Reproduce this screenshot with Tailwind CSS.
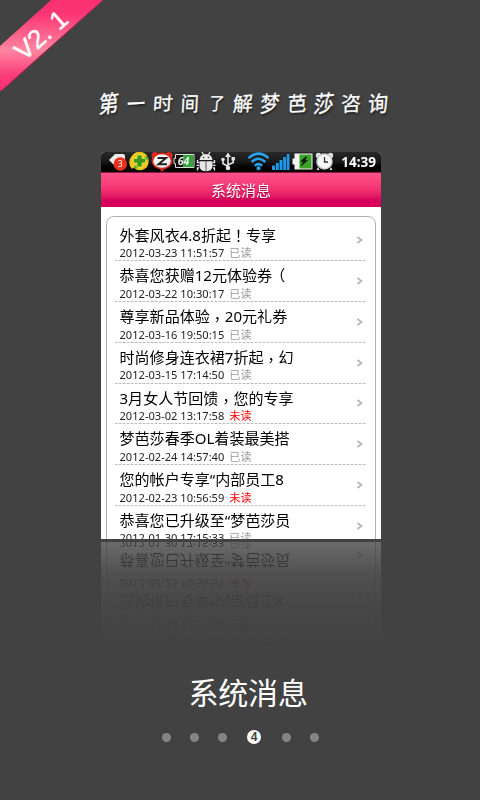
<!DOCTYPE html>
<html lang="zh-CN">
<head>
<meta charset="utf-8">
<title>系统消息</title>
<script src="https://cdn.jsdelivr.net/npm/@tailwindcss/browser@4"></script>
</head>
<body class="bg-[#424242]">
<main class="relative flex h-[800px] w-[480px] flex-col overflow-hidden bg-[#424242] pt-[85px] font-['Noto_Sans','Noto_Sans_CJK_SC',sans-serif]">
  <!-- version ribbon -->
  <div class="absolute top-0 left-0 h-[92px] w-[106px]">
    <svg class="absolute inset-0" width="106" height="92" viewBox="0 0 106 92">
      <defs><linearGradient id="rib" x1="0" y1="0" x2="0" y2="91" gradientUnits="userSpaceOnUse">
        <stop offset="0" stop-color="#fa2f71"/><stop offset=".15" stop-color="#fa3574"/><stop offset=".55" stop-color="#ff86a0"/><stop offset=".82" stop-color="#fa3d78"/><stop offset="1" stop-color="#fa2f71"/>
      </linearGradient></defs>
      <path d="M51 0H103L1 91L0 90V46Z" fill="url(#rib)"/>
      <path d="M103 0L1 91" stroke="#c01f5c" stroke-width="1" fill="none"/>
    </svg>
    <span class="absolute top-[19px] left-[7px] w-[68px] -rotate-[41deg] text-center font-['Liberation_Sans',sans-serif] text-[26px] leading-[32px] whitespace-nowrap text-white [-webkit-text-stroke:0.4px_white]">V2. 1</span>
  </div>

  <h1 class="flex h-[36px] w-[289px] ml-[99px] shrink-0 items-center justify-between font-['Noto_Sans_CJK_SC',sans-serif] text-[20px] text-white [text-shadow:1px_2px_2px_#222] [-webkit-text-stroke:0.3px_white]">
    <span class="inline-block -skew-x-12 -rotate-6 scale-y-115">第</span><span class="inline-block -rotate-3 scale-x-90">一</span><span class="inline-block -skew-x-6 -rotate-3 scale-y-90">时</span><span class="inline-block -skew-x-3 scale-x-90">间</span><span class="inline-block -skew-x-6 scale-x-75 scale-y-90">了</span><span class="inline-block -skew-x-6 -rotate-3">解</span><span class="inline-block -skew-x-12 -rotate-3 scale-x-95 scale-y-110">梦</span><span class="inline-block -skew-x-6 -rotate-3 scale-x-95">芭</span><span class="inline-block -skew-x-12 -rotate-3 scale-y-115">莎</span><span class="inline-block -skew-x-3 -rotate-3">咨</span><span class="inline-block -skew-x-6 -rotate-3 scale-y-110">询</span>
  </h1>

  <section class="mt-[31px] ml-[101px] h-[387px] w-[280px] shrink-0 overflow-hidden rounded-t-[4px] bg-white [-webkit-box-reflect:below_3px_linear-gradient(to_bottom,transparent_72%,rgba(0,0,0,0.03)_84%,rgba(0,0,0,0.08)_92%,rgba(0,0,0,0.22)_100%)]">
    <div class="flex h-[20px] items-center justify-between bg-linear-to-b from-[#292929] via-[#171717] to-black pr-[5px]">
      <svg width="236" height="20" viewBox="101 152 236 20">
        <path d="M109 160L115 154H123Q125 154 125 156V164Q125 166 123 166H115Z" fill="#e9e9e9"/>
        <circle cx="120.300" cy="164" r="6.700" fill="#e8311c"/>
        <text x="120.300" y="167.300" font-size="8.500" text-anchor="middle" fill="#fff">3</text>
        <circle cx="139.500" cy="161" r="9.300" fill="#5fae25"/>
        <path d="M132 156A9 9 0 0 1 147 156L142 159L132 169A9 9 0 0 1 132 156M147 167Q142 172 136 169L148 159Q149 163 147 167" fill="#f2c51c"/>
        <path d="M137 155H142V158.500H145.500V163H142V167H137V163H133.500V158.500H137Z" fill="#3d9219" stroke="#dde85e" stroke-width=".8"/>
        <circle cx="155" cy="155.500" r="3.500" fill="#d92a22"/><circle cx="169" cy="155.500" r="3.500" fill="#d92a22"/>
        <path d="M158 167L162 172L166 167Z" fill="#d92a22"/>
        <ellipse cx="162" cy="161" rx="9.600" ry="7.600" fill="#f5f5f5" stroke="#d92a22" stroke-width="1.800"/>
        <path d="M157.500 158H166L158.500 164.300H167" fill="none" stroke="#222" stroke-width="2"/>
        <path d="M175.500 154.500H194V167.500H175.500V163.500H174V158.500H175.500Z" fill="#111" stroke="#ddd"/>
        <rect x="183" y="155" width="10.500" height="12" fill="#35a33c"/>
        <text x="183.500" y="165" font-size="10.500" font-style="italic" font-weight="600" text-anchor="middle" fill="#fff">64</text>
        <g fill="#e7e7e7"><path d="M199.500 160A6.500 6 0 0 1 212.500 160Z"/><path d="M199.500 161.200H212.500V167Q211.500 171.200 206 171.200Q200.500 171.200 199.500 167Z"/>
        <path d="M202 152L204 155.500M210 152L208 155.500M199 162.500H197.500V160M213 162.500H214.500V160M199 165.300H196.500M213 165.300H215.500M199 168H197.500V170.500M213 168H214.500V170.500" stroke="#e7e7e7" stroke-width="1.300" fill="none"/></g>
        <path d="M206 161V171" stroke="#444" stroke-width=".9"/><circle cx="203.500" cy="157.500" r=".8" fill="#333"/><circle cx="208.500" cy="157.500" r=".8" fill="#333"/>
        <g stroke="#e4e4e4" stroke-width="1.600" fill="none"><path d="M228 156V168M228 166.500L223 163.500V159.500M228 165L233.200 162.500V159"/></g>
        <g fill="#e4e4e4"><path d="M225 157L228 152.500L231 157Z"/><circle cx="228" cy="168" r="2.300"/><circle cx="223" cy="159.500" r="1.800"/><rect x="231.500" y="157" width="3.400" height="3.400"/></g>
        <g stroke="#2aa3ef" stroke-width="2.500" fill="none"><path d="M248.500 158.200Q258.500 149 268.500 158.200M251.700 162Q258.500 155.500 265.300 162M254.800 165.700Q258.500 162.500 262.200 165.700"/></g><circle cx="258.500" cy="168.300" r="2" fill="#2aa3ef"/>
        <g fill="#1f98ec"><rect x="272" y="165.500" width="3" height="4.500"/><rect x="275.800" y="163" width="3" height="7"/><rect x="279.500" y="160" width="3" height="10"/><rect x="283.200" y="157" width="3" height="13"/><rect x="286.800" y="154" width="2.700" height="16"/></g>
        <path d="M294.500 153.500H312.500V169.500H294.500V164.500H292.500V158.500H294.500Z" fill="#f2f2ee"/><rect x="299.500" y="154.500" width="12" height="14" fill="#3aa226"/>
        <path d="M305.500 157L300.500 161.500H303.500L301 166L307.500 160.500H304.500L307 157Z" fill="#101810" stroke="#101810" stroke-width=".6"/>
        <g fill="#ddd"><circle cx="318.500" cy="155.500" r="2.700"/><circle cx="330.500" cy="155.500" r="2.700"/><path d="M318 167L316.500 170H319.500ZM331 167L332.500 170H329.500Z"/></g>
        <circle cx="324.500" cy="161.500" r="7.500" fill="#f6f6f6" stroke="#ccc" stroke-width="1.600"/><path d="M324.500 157V162H328" fill="none" stroke="#333" stroke-width="1.300"/>
      </svg>
      <span class="-ml-[2px] font-['Noto_Sans',sans-serif] text-[13.5px] leading-[18px] pb-[1px] font-bold text-white">14:39</span>
    </div>
    <h2 class="flex h-[35px] items-center justify-center border-t border-[#8f1741] bg-linear-to-b from-[#fb5289] from-0% via-[#f53474] via-45% to-[#d8005a] to-80% text-[15px] text-white [text-shadow:0_1px_1px_#a3003f]">系统消息</h2>
    <ul id="list" class="mx-[5px] mt-[9px] h-[400px] rounded-t-[8px] border border-[#b0b0b0] px-[8px] pt-[3.5px]"></ul>
  </section>

  <h3 class="mt-[130px] flex h-[44px] shrink-0 items-center pl-[188.5px] font-['Noto_Sans_CJK_SC',sans-serif] text-[30px] tracking-[-0.2px] text-white">系统消息</h3>
  <nav class="mt-[16px] ml-[162px] flex h-[16px] w-[157px] items-center">
    <i class="mt-[1px] mr-[19px] size-[9px] rounded-full bg-[#858585]"></i>
    <i class="mr-[19px] size-[9px] rounded-full bg-[#858585]"></i>
    <i class="mr-[20px] size-[9px] rounded-full bg-[#858585]"></i>
    <b class="mr-[21px] flex size-[14px] items-center justify-center rounded-full bg-white font-['Liberation_Sans',sans-serif] text-[12px] leading-none text-[#424242]">4</b>
    <i class="mr-[19px] size-[9px] rounded-full bg-[#858585]"></i>
    <i class="size-[9px] rounded-full bg-[#858585]"></i>
  </nav>
</main>
<script>
const rows = [
  ['外套风衣4.8折起！专享', '2012-03-23 11:51:57', 1],
  ['恭喜您获赠12元体验券（', '2012-03-22 10:30:17', 1],
  ['尊享新品体验，20元礼券', '2012-03-16 19:50:15', 1],
  ['时尚修身连衣裙7折起，幻', '2012-03-15 17:14:50', 1],
  ['3月女人节回馈，您的专享', '2012-03-02 13:17:58', 0],
  ['梦芭莎春季OL着装最美搭', '2012-02-24 14:57:40', 1],
  ['您的帐户专享“内部员工8', '2012-02-23 10:56:59', 0],
  ['恭喜您已升级至“梦芭莎员', '2012-01-30 17:15:33', 1]
];
// full-width punctuation sits in the middle of its cell
const centred = t => t
  .replace(/！/g, '<span lang="zh-TW" class="font-[\'Noto_Sans_CJK_TC\',sans-serif]">！</span>')
  .replace(/，/g, '<span lang="zh-TW" class="relative top-[3px] font-[\'Noto_Sans_CJK_TC\',sans-serif]">，</span>')
  .replace('（', '<span class="inline-block w-[13px] indent-[-2px]">（</span>');
document.getElementById('list').innerHTML = rows.map(([title, date, read]) => `
  <li class="flex h-[40.75px] items-center justify-between bg-[repeating-linear-gradient(90deg,#b8b8b8_0_2px,#e8e8e8_2px_4px)] bg-[length:100%_1px] bg-bottom bg-no-repeat pr-[4px] pl-[4.5px]">
    <div class="whitespace-nowrap">
      <p class="h-[23.5px] pt-[3px] text-[15.05px] leading-[20px] text-black">${centred(title)}</p>
      <p class="flex h-[15px] gap-[5px] text-[11.1px] leading-[16px] text-[#222]"><span>${date}</span><span class="${read ? 'text-[#999]' : 'text-[#ff0000]'}">${read ? '已读' : '未读'}</span></p>
    </div>
    <svg class="-mt-[1px]" width="7" height="8" viewBox="0 0 7 8"><path d="M1.500 1L5.500 4L1.500 7" fill="none" stroke="#b5b5b5" stroke-width="1.700"/></svg>
  </li>`).join('');
</script>
</body>
</html>
